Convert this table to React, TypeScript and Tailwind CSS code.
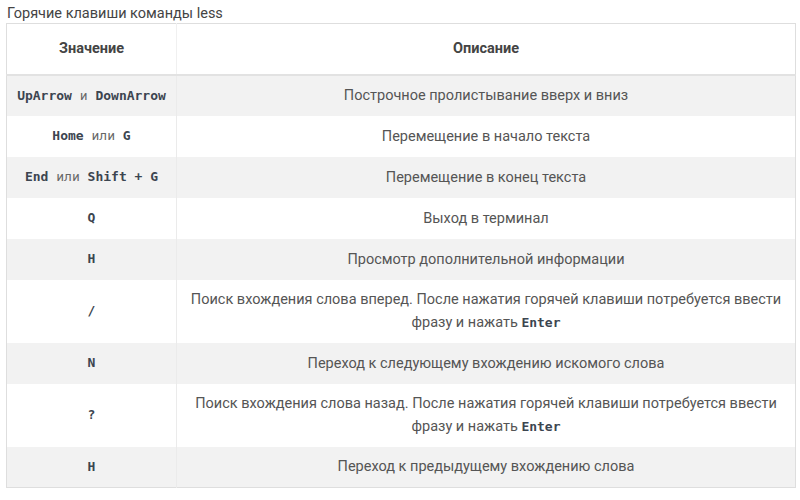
import React from "react";

const mono = { fontFamily: '"DejaVu Sans Mono", "Liberation Mono", monospace' };

function K({ children }: { children: React.ReactNode }) {
  return <span className="font-bold text-[#3c4550]">{children}</span>;
}

function W({ children }: { children: React.ReactNode }) {
  return <span className="font-normal text-[#666]">{children}</span>;
}

function C({ children }: { children: React.ReactNode }) {
  return (
    <code className="text-[13px]" style={mono}>
      {children}
    </code>
  );
}

const rows: { k: React.ReactNode; d: React.ReactNode; tall?: boolean }[] = [
  { k: <><K>UpArrow</K> <W>и</W> <K>DownArrow</K></>, d: "Построчное пролистывание вверх и вниз" },
  { k: <><K>Home</K> <W>или</W> <K>G</K></>, d: "Перемещение в начало текста" },
  { k: <><K>End</K> <W>или</W> <K>Shift + G</K></>, d: "Перемещение в конец текста" },
  { k: <K>Q</K>, d: "Выход в терминал" },
  { k: <K>H</K>, d: "Просмотр дополнительной информации" },
  {
    k: <K>/</K>,
    d: <>Поиск вхождения слова вперед. После нажатия горячей клавиши потребуется ввести<br />фразу и нажать <C><K>Enter</K></C></>,
    tall: true,
  },
  { k: <K>N</K>, d: "Переход к следующему вхождению искомого слова" },
  {
    k: <K>?</K>,
    d: <>Поиск вхождения слова назад. После нажатия горячей клавиши потребуется ввести<br />фразу и нажать <C><K>Enter</K></C></>,
    tall: true,
  },
  { k: <K>H</K>, d: "Переход к предыдущему вхождению слова" },
];

export default function App() {
  return (
    <div
      className="w-[800px] h-[500px] bg-white pl-[6px] pt-[4px]"
      style={{ fontFamily: 'Roboto, "Noto Sans", sans-serif' }}
    >
      <div className="text-[14.5px] leading-[19px] text-[#444] pl-[1px]">Горячие клавиши команды less</div>
      <table className="w-[790px] border-collapse border border-[#dedede] text-[14.5px] text-[#555] table-fixed">
        <colgroup>
          <col className="w-[170px]" />
          <col />
        </colgroup>
        <thead>
          <tr className="h-[51px] bg-white">
            <th className="font-bold text-[#444] text-center border-r border-[#f0f0f0] border-b-2 border-b-[#e2e2e2]">
              Значение
            </th>
            <th className="font-bold text-[#444] text-center border-b-2 border-b-[#e2e2e2]">Описание</th>
          </tr>
        </thead>
        <tbody>
          {rows.map((r, i) => (
            <tr
              key={i}
              className={(r.tall ? "h-[63px] " : "h-[41px] ") + (i % 2 === 0 ? "bg-[#f2f2f2]" : "bg-white")}
            >
              <td className="text-center align-middle border-r border-[#ebebeb] whitespace-nowrap">
                <C>{r.k}</C>
              </td>
              <td className="text-center align-middle leading-[23px]">{r.d}</td>
            </tr>
          ))}
        </tbody>
      </table>
    </div>
  );
}
